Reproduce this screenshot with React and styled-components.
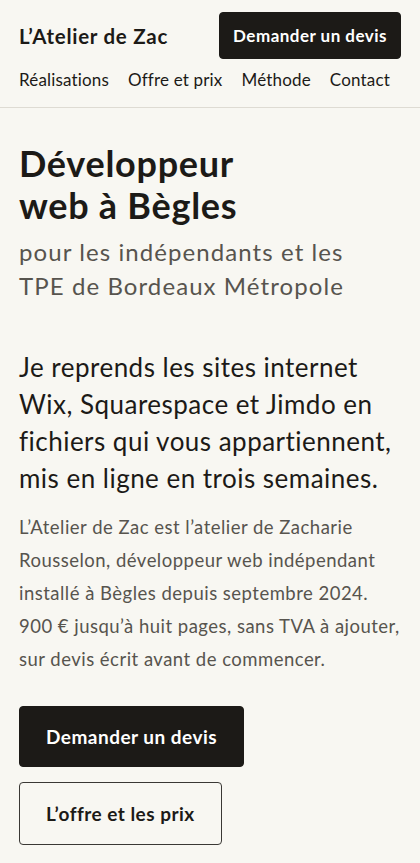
import React from 'react';
import styled, { createGlobalStyle } from 'styled-components';

const GlobalStyle = createGlobalStyle`
  html, body {
    margin: 0;
    padding: 0;
    background: #f8f7f2;
  }
  body {
    font-family: Lato, "Noto Sans", sans-serif;
    color: #1c1a17;
    letter-spacing: 0.03em;
    -webkit-font-smoothing: antialiased;
  }
  * {
    box-sizing: border-box;
  }
`;

const Header = styled.header`
  padding: 12px 19px 0;
  border-bottom: 1px solid #dedbd3;
`;

const TopRow = styled.div`
  display: flex;
  align-items: center;
  justify-content: space-between;
`;

const Logo = styled.a`
  font-size: 20.5px;
  font-weight: 700;
  letter-spacing: 0.035em;
  color: #1c1a17;
  text-decoration: none;
`;

const Button = styled.a`
  display: inline-flex;
  align-items: center;
  justify-content: center;
  height: ${p => p.$h}px;
  padding: 0 ${p => p.$px}px;
  font-size: ${p => p.$fs}px;
  font-weight: 700;
  border-radius: 4px;
  text-decoration: none;
  color: ${p => (p.$outline ? '#1c1a17' : '#ffffff')};
  background: ${p => (p.$outline ? 'transparent' : '#1c1a17')};
  border: 1px solid ${p => (p.$outline ? '#3a3835' : '#1c1a17')};
`;

const Nav = styled.nav`
  display: flex;
  gap: 19px;
  padding: 10px 0 17px;
`;

const NavLink = styled.a`
  font-size: 17px;
  letter-spacing: 0.01em;
  color: #1c1a17;
  text-decoration: none;
`;

const Main = styled.main`
  padding: 34px 19px 20px;
`;

const Title = styled.h1`
  margin: 0;
  max-width: 260px;
  font-size: 36px;
  line-height: 42px;
  font-weight: 700;
  letter-spacing: 0.02em;
`;

const Subtitle = styled.p`
  margin: 9px 0 0;
  max-width: 350px;
  font-size: 24px;
  line-height: 34px;
  letter-spacing: 0.045em;
  color: #57544e;
`;

const Lead = styled.p`
  margin: 46px 0 0;
  font-size: 26px;
  line-height: 37px;
  color: #1c1a17;
`;

const Body = styled.p`
  margin: 14px 0 0;
  font-size: 18.5px;
  line-height: 33px;
  color: #57544e;
`;

const Actions = styled.div`
  display: flex;
  flex-direction: column;
  align-items: flex-start;
  gap: 15px;
  margin-top: 30px;
`;

export default function App() {
  return (
    <>
      <GlobalStyle />
      <Header>
        <TopRow>
          <Logo href="#">L’Atelier de Zac</Logo>
          <Button href="#" $h={47} $px={13} $fs={17}>Demander un devis</Button>
        </TopRow>
        <Nav>
          <NavLink href="#">Réalisations</NavLink>
          <NavLink href="#">Offre et prix</NavLink>
          <NavLink href="#">Méthode</NavLink>
          <NavLink href="#">Contact</NavLink>
        </Nav>
      </Header>
      <Main>
        <Title>Développeur web à Bègles</Title>
        <Subtitle>pour les indépendants et les TPE de Bordeaux Métropole</Subtitle>
        <Lead>
          Je reprends les sites internet Wix, Squarespace et Jimdo en fichiers qui vous appartiennent, mis en ligne en trois semaines.
        </Lead>
        <Body>
          L’Atelier de Zac est l’atelier de Zacharie Rousselon, développeur web indépendant installé à Bègles depuis septembre 2024. 900 € jusqu’à huit pages, sans TVA à ajouter, sur devis écrit avant de commencer.
        </Body>
        <Actions>
          <Button href="#" $h={61} $px={26} $fs={19}>Demander un devis</Button>
          <Button href="#" $h={63} $px={26} $fs={19} $outline>L’offre et les prix</Button>
        </Actions>
      </Main>
    </>
  );
}
